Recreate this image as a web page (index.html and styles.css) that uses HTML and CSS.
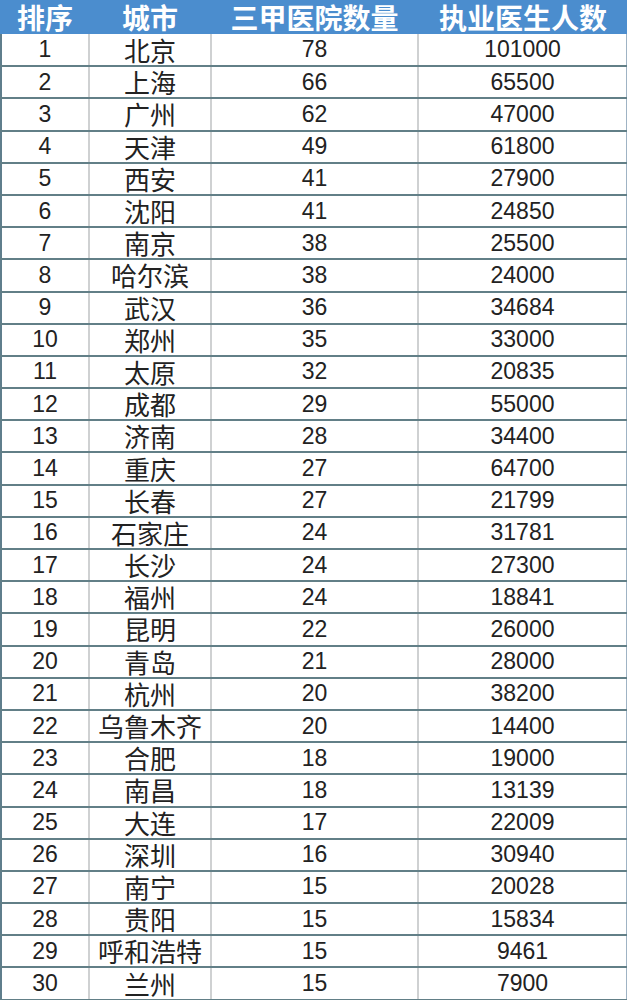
FILE: index.html
```html
<!DOCTYPE html>
<html lang="zh">
<head>
<meta charset="utf-8">
<link rel="stylesheet" href="styles.css">
</head>
<body>
<table class="tbl">
<colgroup><col class="c1"><col class="c2"><col class="c3"><col class="c4"></colgroup>
<thead>
<tr><th>排序</th><th>城市</th><th>三甲医院数量</th><th>执业医生人数</th></tr>
</thead>
<tbody>
<tr><td class="n">1</td><td class="city">北京</td><td class="n">78</td><td class="n">101000</td></tr>
<tr><td class="n">2</td><td class="city">上海</td><td class="n">66</td><td class="n">65500</td></tr>
<tr><td class="n">3</td><td class="city">广州</td><td class="n">62</td><td class="n">47000</td></tr>
<tr><td class="n">4</td><td class="city">天津</td><td class="n">49</td><td class="n">61800</td></tr>
<tr><td class="n">5</td><td class="city">西安</td><td class="n">41</td><td class="n">27900</td></tr>
<tr><td class="n">6</td><td class="city">沈阳</td><td class="n">41</td><td class="n">24850</td></tr>
<tr><td class="n">7</td><td class="city">南京</td><td class="n">38</td><td class="n">25500</td></tr>
<tr><td class="n">8</td><td class="city">哈尔滨</td><td class="n">38</td><td class="n">24000</td></tr>
<tr><td class="n">9</td><td class="city">武汉</td><td class="n">36</td><td class="n">34684</td></tr>
<tr><td class="n">10</td><td class="city">郑州</td><td class="n">35</td><td class="n">33000</td></tr>
<tr><td class="n">11</td><td class="city">太原</td><td class="n">32</td><td class="n">20835</td></tr>
<tr><td class="n">12</td><td class="city">成都</td><td class="n">29</td><td class="n">55000</td></tr>
<tr><td class="n">13</td><td class="city">济南</td><td class="n">28</td><td class="n">34400</td></tr>
<tr><td class="n">14</td><td class="city">重庆</td><td class="n">27</td><td class="n">64700</td></tr>
<tr><td class="n">15</td><td class="city">长春</td><td class="n">27</td><td class="n">21799</td></tr>
<tr><td class="n">16</td><td class="city">石家庄</td><td class="n">24</td><td class="n">31781</td></tr>
<tr><td class="n">17</td><td class="city">长沙</td><td class="n">24</td><td class="n">27300</td></tr>
<tr><td class="n">18</td><td class="city">福州</td><td class="n">24</td><td class="n">18841</td></tr>
<tr><td class="n">19</td><td class="city">昆明</td><td class="n">22</td><td class="n">26000</td></tr>
<tr><td class="n">20</td><td class="city">青岛</td><td class="n">21</td><td class="n">28000</td></tr>
<tr><td class="n">21</td><td class="city">杭州</td><td class="n">20</td><td class="n">38200</td></tr>
<tr><td class="n">22</td><td class="city">乌鲁木齐</td><td class="n">20</td><td class="n">14400</td></tr>
<tr><td class="n">23</td><td class="city">合肥</td><td class="n">18</td><td class="n">19000</td></tr>
<tr><td class="n">24</td><td class="city">南昌</td><td class="n">18</td><td class="n">13139</td></tr>
<tr><td class="n">25</td><td class="city">大连</td><td class="n">17</td><td class="n">22009</td></tr>
<tr><td class="n">26</td><td class="city">深圳</td><td class="n">16</td><td class="n">30940</td></tr>
<tr><td class="n">27</td><td class="city">南宁</td><td class="n">15</td><td class="n">20028</td></tr>
<tr><td class="n">28</td><td class="city">贵阳</td><td class="n">15</td><td class="n">15834</td></tr>
<tr><td class="n">29</td><td class="city">呼和浩特</td><td class="n">15</td><td class="n">9461</td></tr>
<tr><td class="n">30</td><td class="city">兰州</td><td class="n">15</td><td class="n">7900</td></tr>
</tbody>
</table>
</body>
</html>
```
FILE: styles.css
```css
html, body {
  margin: 0;
  padding: 0;
  background: #ffffff;
}
.tbl {
  width: 626px;
  border-collapse: collapse;
  table-layout: fixed;
  font-family: "Noto Sans CJK SC", sans-serif;
  color: #222222;
}
.c1 { width: 88px; }
.c2 { width: 122px; }
.c3 { width: 207px; }
.c4 { width: 209px; }
.tbl th {
  height: 34px;
  padding: 0;
  background: #4b8dce;
  color: #ffffff;
  font-size: 28px;
  font-weight: 700;
  line-height: 1;
  text-align: center;
  vertical-align: middle;
  border-left: 2px solid #4b8dce;
}
.tbl td {
  height: 32.2px;
  padding: 0;
  text-align: center;
  vertical-align: middle;
  line-height: 1;
  border-bottom: 2px solid #627f87;
  border-left: 2px solid #cfd1d2;
  box-sizing: border-box;
}
.tbl td:first-child {
  border-left: 2px solid #5f7e8c;
}
.tbl td:last-child {
  border-right: 2px solid #9fb3c4;
}
.tbl td.n {
  font-family: "Liberation Sans", Arial, sans-serif;
  font-size: 23px;
}
.tbl td.city {
  font-size: 26px;
}
```
